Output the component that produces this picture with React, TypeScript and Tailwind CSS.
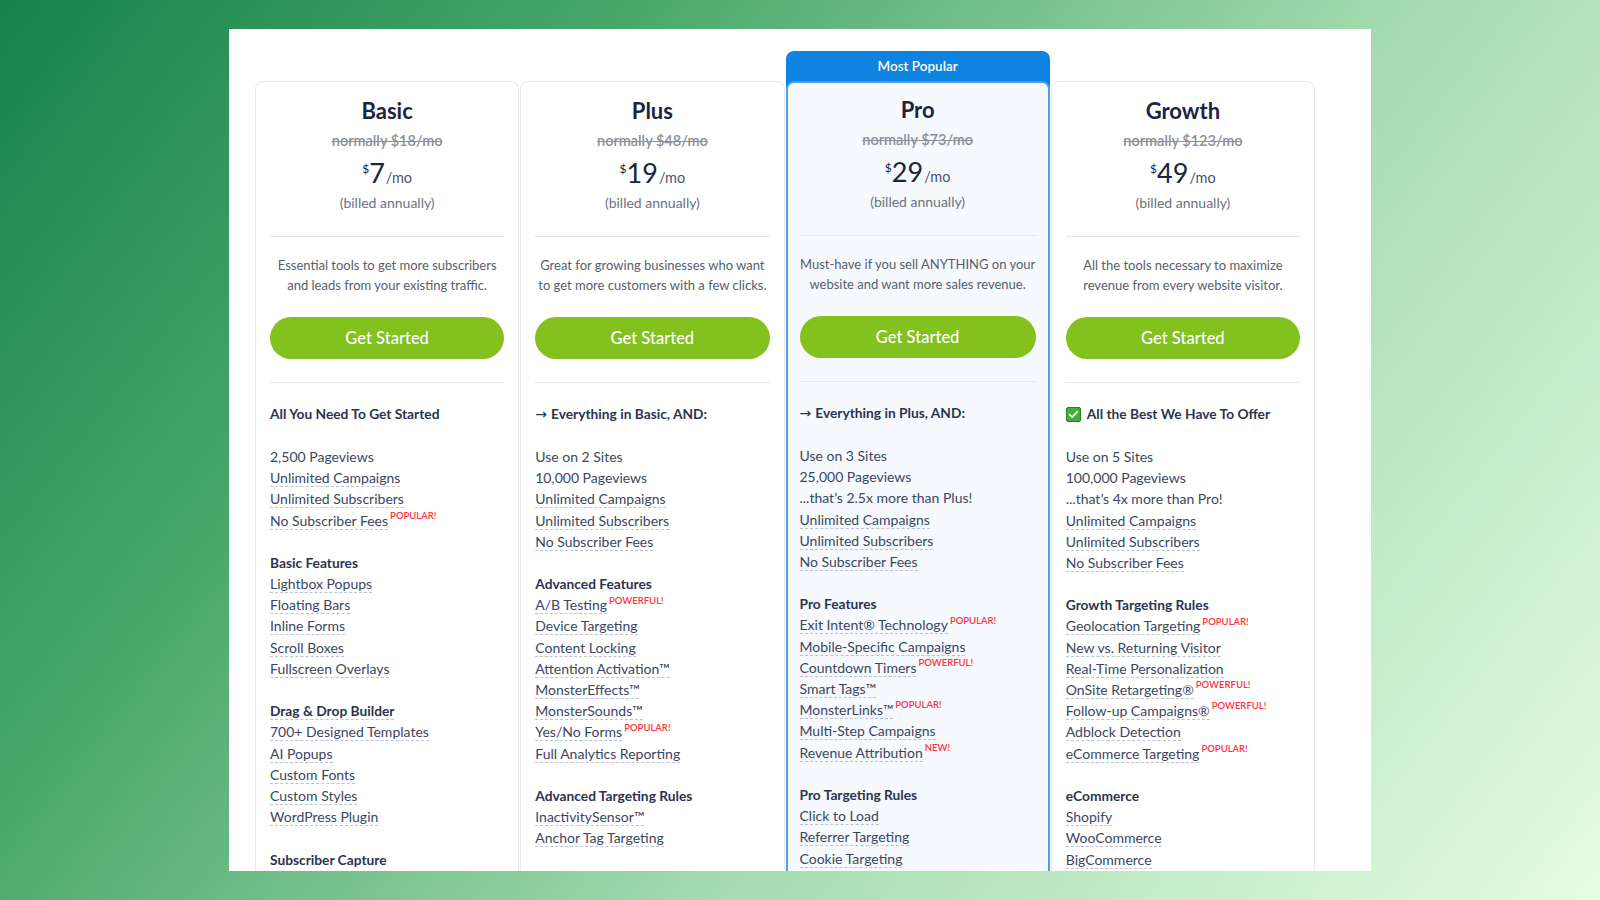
import React from "react";

type Plan = {
  name: string;
  old: string;
  price: string;
  desc: [string, string];
  intro: string;
  introIcon?: "arrow" | "check";
  rows: string[];
  popular?: boolean;
};

// row codes: "" blank line, "# " heading, "* " underlined heading, ". " plain, "- " underlined item; "|BADGE" adds a red tag
const plans: Plan[] = [
  {
    name: "Basic",
    old: "normally $18/mo",
    price: "7",
    desc: ["Essential tools to get more subscribers", "and leads from your existing traffic."],
    intro: "All You Need To Get Started",
    rows: [
      "",
      ". 2,500 Pageviews",
      "- Unlimited Campaigns",
      "- Unlimited Subscribers",
      "- No Subscriber Fees|POPULAR!",
      "",
      "# Basic Features",
      "- Lightbox Popups",
      "- Floating Bars",
      "- Inline Forms",
      "- Scroll Boxes",
      "- Fullscreen Overlays",
      "",
      "* Drag & Drop Builder",
      "- 700+ Designed Templates",
      "- AI Popups",
      "- Custom Fonts",
      "- Custom Styles",
      "- WordPress Plugin",
      "",
      "# Subscriber Capture",
    ],
  },
  {
    name: "Plus",
    old: "normally $48/mo",
    price: "19",
    desc: ["Great for growing businesses who want", "to get more customers with a few clicks."],
    intro: "Everything in Basic, AND:",
    introIcon: "arrow",
    rows: [
      "",
      ". Use on 2 Sites",
      ". 10,000 Pageviews",
      "- Unlimited Campaigns",
      "- Unlimited Subscribers",
      "- No Subscriber Fees",
      "",
      "# Advanced Features",
      "- A/B Testing|POWERFUL!",
      "- Device Targeting",
      "- Content Locking",
      "- Attention Activation™",
      "- MonsterEffects™",
      "- MonsterSounds™",
      "- Yes/No Forms|POPULAR!",
      "- Full Analytics Reporting",
      "",
      "# Advanced Targeting Rules",
      "- InactivitySensor™",
      "- Anchor Tag Targeting",
    ],
  },
  {
    name: "Pro",
    old: "normally $73/mo",
    price: "29",
    desc: ["Must-have if you sell ANYTHING on your", "website and want more sales revenue."],
    intro: "Everything in Plus, AND:",
    introIcon: "arrow",
    popular: true,
    rows: [
      "",
      ". Use on 3 Sites",
      ". 25,000 Pageviews",
      ". ...that’s 2.5x more than Plus!",
      "- Unlimited Campaigns",
      "- Unlimited Subscribers",
      "- No Subscriber Fees",
      "",
      "# Pro Features",
      "- Exit Intent® Technology|POPULAR!",
      "- Mobile-Specific Campaigns",
      "- Countdown Timers|POWERFUL!",
      "- Smart Tags™",
      "- MonsterLinks™|POPULAR!",
      "- Multi-Step Campaigns",
      "- Revenue Attribution|NEW!",
      "",
      "# Pro Targeting Rules",
      "- Click to Load",
      "- Referrer Targeting",
      "- Cookie Targeting",
    ],
  },
  {
    name: "Growth",
    old: "normally $123/mo",
    price: "49",
    desc: ["All the tools necessary to maximize", "revenue from every website visitor."],
    intro: "All the Best We Have To Offer",
    introIcon: "check",
    rows: [
      "",
      ". Use on 5 Sites",
      ". 100,000 Pageviews",
      ". ...that’s 4x more than Pro!",
      "- Unlimited Campaigns",
      "- Unlimited Subscribers",
      "- No Subscriber Fees",
      "",
      "# Growth Targeting Rules",
      "- Geolocation Targeting|POPULAR!",
      "- New vs. Returning Visitor",
      "- Real-Time Personalization",
      "- OnSite Retargeting®|POWERFUL!",
      "- Follow-up Campaigns®|POWERFUL!",
      "- Adblock Detection",
      "- eCommerce Targeting|POPULAR!",
      "",
      "# eCommerce",
      "- Shopify",
      "- WooCommerce",
      "- BigCommerce",
    ],
  },
];

const CheckBox = () => (
  <svg width="15" height="15" viewBox="0 0 15 15" className="mr-[6px] shrink-0">
    <rect x="0.5" y="0.5" width="14" height="14" rx="1.5" fill="#3fae3a" stroke="#2b7d28" />
    <path d="M3.6 7.6 L6.2 10.1 L11.4 4.6" fill="none" stroke="#fff" strokeWidth="1.7" strokeLinecap="round" strokeLinejoin="round" />
  </svg>
);

const Row = ({ code }: { code: string }) => {
  if (code === "") return <div className="h-[21.2px]" />;
  const kind = code[0];
  const [text, badge] = code.slice(2).split("|");
  const heading = kind === "#" || kind === "*";
  const underline = kind === "-" || kind === "*";
  return (
    <div className="flex h-[21.2px] items-center">
      <span
        className={`leading-[17px] ${heading ? "text-[13.75px] font-bold text-[#2b3450]" : "text-[14px] text-[#3b4661]"} ${
          underline ? "border-b border-dashed border-[#bcc3ce]" : "border-b border-transparent"
        }`}
      >
        {text}
      </span>
      {badge && <span className="relative -top-[5px] ml-[2px] text-[9.5px] font-semibold leading-none text-[#ff3340]">{badge}</span>}
    </div>
  );
};

const Card = ({ plan }: { plan: Plan }) => (
  <div
    className={`flex h-[900px] flex-col rounded-lg ${
      plan.popular ? "border-2 border-[#4f9fe8] bg-[#f6f9fd] px-[12px] pt-[13px]" : "border border-[#e7e9ec] bg-white px-[14px] pt-[15px]"
    }`}
  >
    <div className="text-center text-[22px] font-bold leading-[28px] text-[#1b2542]">{plan.name}</div>
    <div className="mt-[6px] text-center text-[14.5px] font-semibold leading-[20px] text-[#8b9099] line-through">{plan.old}</div>
    <div className="mt-[8px] flex h-[28px] items-end justify-center text-[#1b2542]">
      <span className="mb-[12px] text-[12px] leading-none">$</span>
      <span className="text-[27px] leading-[28px]">{plan.price}</span>
      <span className="ml-[1px] text-[14.5px] leading-[18px] text-[#4a5470]">/mo</span>
    </div>
    <div className="mt-[7px] text-center text-[14px] leading-[18px] text-[#6c7282]">(billed annually)</div>
    <div className="mt-[24px] h-px bg-[#e4e6ea]" />
    <div className="mt-[18px] text-center text-[13px] leading-[20px] text-[#575e6e]">
      <div>{plan.desc[0]}</div>
      <div>{plan.desc[1]}</div>
    </div>
    <button className="mt-[22px] h-[42px] rounded-full bg-[#83c11f] text-[16.5px] font-medium text-white">Get Started</button>
    <div className="mt-[23px] h-px bg-[#e4e6ea]" />
    <div className="mt-[21px]">
      <div className="flex h-[21.2px] items-center text-[13.75px] font-bold text-[#2b3450]">
        {plan.introIcon === "arrow" && <span className="mr-[4px] font-['DejaVu_Sans',sans-serif] text-[14px] font-normal">→</span>}
        {plan.introIcon === "check" && <CheckBox />}
        <span>{plan.intro}</span>
      </div>
      {plan.rows.map((r, i) => (
        <Row key={i} code={r} />
      ))}
    </div>
  </div>
);

export default function App() {
  return (
    <div className="h-[900px] w-[1600px] overflow-hidden bg-[linear-gradient(128deg,#16834a_0%,#4aa86a_28%,#a6dcb0_62%,#e4fde0_100%)] pt-[29px] font-['Lato',sans-serif]">
      <div className="mx-auto h-[842px] w-[1142px] overflow-hidden bg-white pl-[26px] pt-[22px]">
        <div className="grid w-[1060px] grid-cols-4 items-start gap-[1px]">
          {plans.map((p) =>
            p.popular ? (
              <div key={p.name} className="rounded-t-lg bg-[#0e83e0]">
                <div className="flex h-[30px] items-center justify-center pt-[1px] text-[13.5px] font-semibold text-white">Most Popular</div>
                <Card plan={p} />
              </div>
            ) : (
              <div key={p.name} className="mt-[30px]">
                <Card plan={p} />
              </div>
            )
          )}
        </div>
      </div>
    </div>
  );
}
